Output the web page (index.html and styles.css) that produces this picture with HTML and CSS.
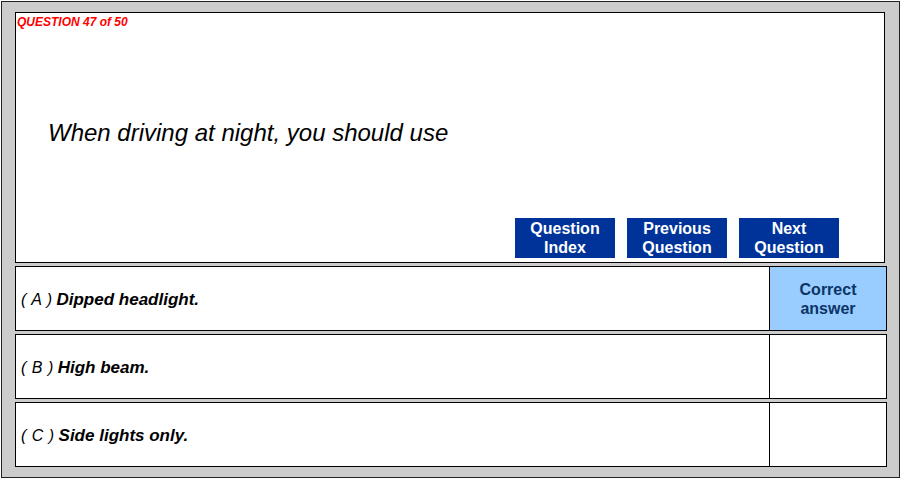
FILE: index.html
```html
<!DOCTYPE html>
<html>
<head>
<meta charset="utf-8">
<link rel="stylesheet" href="styles.css">
</head>
<body>
<div class="frame">
  <div class="qbox">
    <div class="qnum">QUESTION 47 of 50</div>
    <div class="qtext">When driving at night, you should use</div>
    <div class="nav">
      <button class="btn">Question<br>Index</button>
      <button class="btn">Previous<br>Question</button>
      <button class="btn">Next<br>Question</button>
    </div>
  </div>
  <div class="row">
    <div class="ans"><p class="line"><span class="letter">( A )</span> <span class="atext">Dipped headlight.</span></p></div>
    <div class="mark correct">Correct<br>answer</div>
  </div>
  <div class="row">
    <div class="ans"><p class="line"><span class="letter">( B )</span> <span class="atext">High beam.</span></p></div>
    <div class="mark"></div>
  </div>
  <div class="row">
    <div class="ans"><p class="line"><span class="letter">( C )</span> <span class="atext">Side lights only.</span></p></div>
    <div class="mark"></div>
  </div>
</div>
</body>
</html>
```

FILE: styles.css
```css
* { box-sizing: border-box; }
html, body { margin: 0; padding: 0; background: #ffffff; }
body { font-family: "Liberation Sans", Arial, sans-serif; }

.frame {
  margin: 1px 0 0 1px;
  width: 899px;
  height: 477px;
  border: 1px solid #222;
  background: #cccccc;
  padding: 10px 0 0 13px;
  display: flex;
  flex-direction: column;
  gap: 3px;
}

.qbox {
  width: 870px;
  height: 251px;
  border: 1px solid #000;
  background: #fff;
  display: flex;
  flex-direction: column;
  padding: 2px 45px 4px 1px;
}

.qnum {
  color: #ff0000;
  font-weight: bold;
  font-style: italic;
  font-size: 12px;
  line-height: 14px;
}

.qtext {
  flex: 1;
  display: flex;
  align-items: center;
  padding: 19px 0 0 31px;
  font-style: italic;
  font-size: 24px;
  color: #000;
}

.nav {
  display: flex;
  justify-content: flex-end;
  gap: 12px;
}

.btn {
  width: 100px;
  height: 40px;
  border: none;
  margin: 0;
  padding: 0;
  background: #003399;
  color: #fff;
  font-family: "Liberation Sans", Arial, sans-serif;
  font-weight: bold;
  font-size: 16px;
  line-height: 19px;
  text-align: center;
}

.row {
  width: 872px;
  height: 65px;
  border: 1px solid #000;
  background: #fff;
  display: flex;
}

.ans {
  flex: 1;
  display: flex;
  align-items: center;
  padding: 2px 0 0 5px;
}

.line { margin: 0; }

.letter {
  font-style: italic;
  font-size: 16px;
  word-spacing: 1px;
  color: #000;
  font-weight: normal;
}

.atext {
  font-style: italic;
  font-weight: bold;
  font-size: 17px;
  color: #000;
}

.mark {
  width: 117px;
  border-left: 1px solid #000;
  display: flex;
  align-items: center;
  justify-content: center;
  text-align: center;
  font-weight: bold;
  font-size: 16px;
  line-height: 19px;
  color: #0b3566;
}
.mark.correct { background: #99ccff; }
```
